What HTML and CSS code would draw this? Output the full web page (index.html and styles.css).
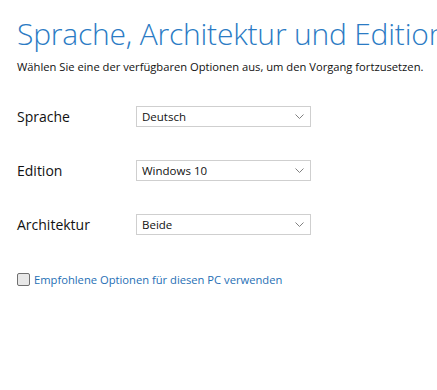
FILE: index.html
```html
<!DOCTYPE html>
<html lang="de">
<head>
    <meta charset="UTF-8">
    <title>Sprache, Architektur und Edition</title>
    <link rel="stylesheet" href="styles.css">
</head>
<body>
    <div class="setup-page">
        <h1 class="setup-title">Sprache, Architektur und Edition</h1>
        <p class="setup-subtitle">Wählen Sie eine der verfügbaren Optionen aus, um den Vorgang fortzusetzen.</p>
        <div class="option-list">
            <div class="option-row">
                <label class="option-label">Sprache</label>
                <div class="option-select">
                    <span>Deutsch</span>
                    <svg class="chevron" width="9" height="5" viewBox="0 0 9 5"><path d="M0.5 0.5 L4.5 4.5 L8.5 0.5" fill="none" stroke="#808080" stroke-width="1"/></svg>
                </div>
            </div>
            <div class="option-row">
                <label class="option-label">Edition</label>
                <div class="option-select">
                    <span>Windows 10</span>
                    <svg class="chevron" width="9" height="5" viewBox="0 0 9 5"><path d="M0.5 0.5 L4.5 4.5 L8.5 0.5" fill="none" stroke="#808080" stroke-width="1"/></svg>
                </div>
            </div>
            <div class="option-row">
                <label class="option-label">Architektur</label>
                <div class="option-select">
                    <span>Beide</span>
                    <svg class="chevron" width="9" height="5" viewBox="0 0 9 5"><path d="M0.5 0.5 L4.5 4.5 L8.5 0.5" fill="none" stroke="#808080" stroke-width="1"/></svg>
                </div>
            </div>
        </div>
        <div class="recommended">
            <span class="check-box"></span>
            <span class="recommended-text">Empfohlene Optionen für diesen PC verwenden</span>
        </div>
    </div>
</body>
</html>
```

FILE: styles.css
```css
body {
    margin: 0;
    background-color: #ffffff;
    font-family: "Open Sans", "Noto Sans", sans-serif;
    overflow: hidden;
}
.setup-page {
    padding: 14px 0 0 17px;
    white-space: nowrap;
}
.setup-title {
    margin: 0;
    font-size: 30px;
    font-weight: 300;
    color: #2b7bc4;
    line-height: 40px;
    letter-spacing: -0.2px;
}
.setup-subtitle {
    margin: 5px 0 0 0;
    font-size: 11.2px;
    color: #111111;
    line-height: 16px;
}
.option-list {
    margin-top: 31px;
    display: flex;
    flex-direction: column;
    gap: 33px;
}
.option-row {
    display: flex;
    align-items: center;
    height: 21px;
}
.option-label {
    width: 119px;
    font-size: 14px;
    color: #111111;
}
.option-select {
    width: 162px;
    height: 19px;
    border: 1px solid #cfcfcf;
    display: flex;
    align-items: center;
    justify-content: space-between;
    padding: 0 6px 0 5px;
    box-sizing: content-box;
    font-size: 11.5px;
    color: #111111;
}
.chevron {
    display: block;
}
.recommended {
    margin-top: 37px;
    display: flex;
    align-items: center;
    gap: 4px;
}
.check-box {
    width: 11px;
    height: 11px;
    border: 1px solid #707070;
    border-radius: 2px;
    background-color: #e8e8e8;
}
.recommended-text {
    font-size: 11.2px;
    color: #1f6fb5;
}
```
